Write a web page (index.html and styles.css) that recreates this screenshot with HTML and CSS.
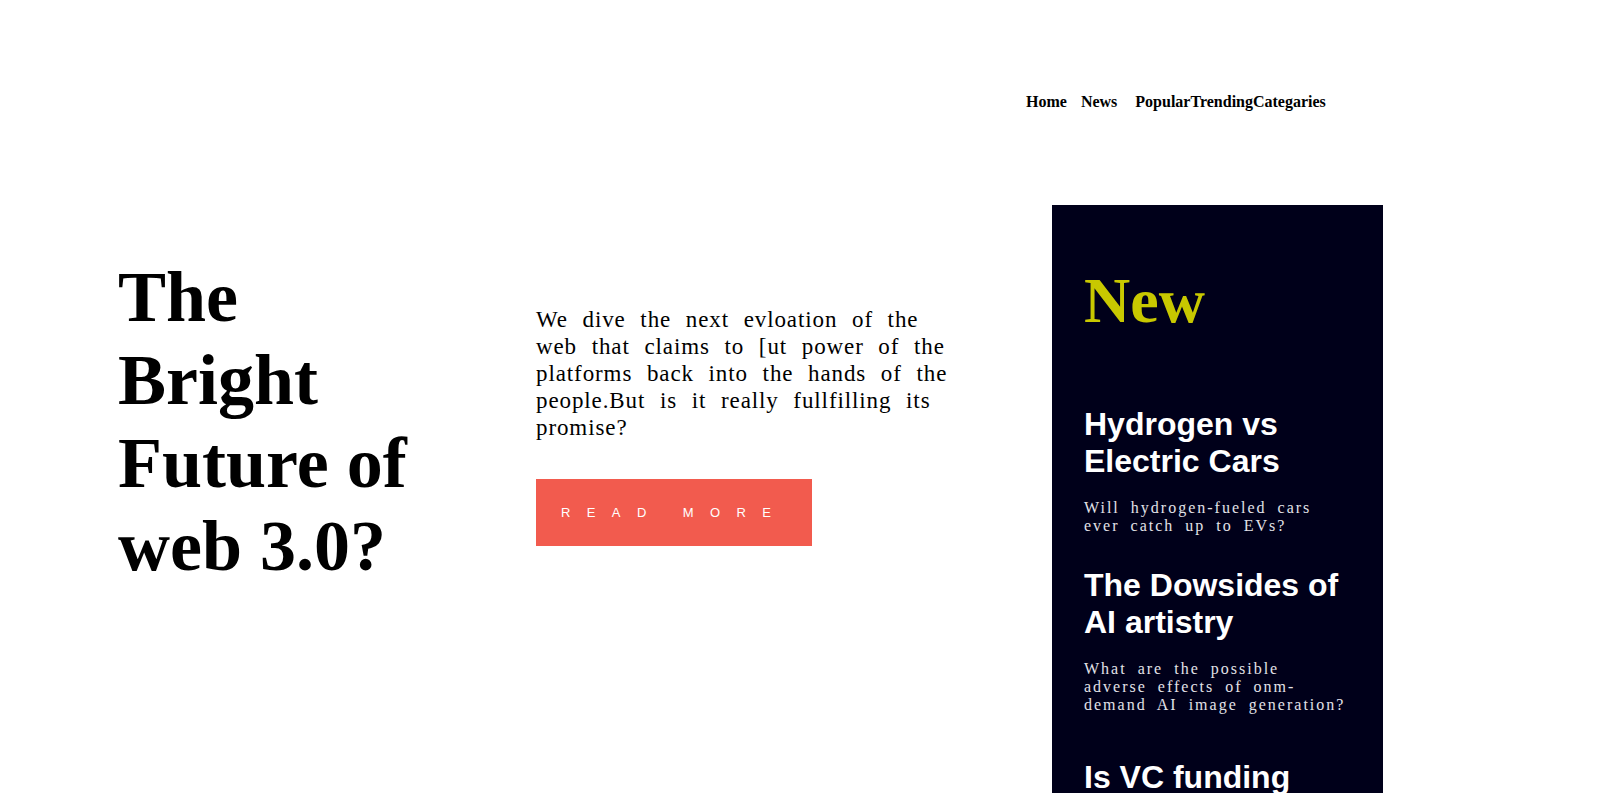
FILE: index.html
```html
<!DOCTYPE html>
<html lang="en">
<head>
<meta charset="utf-8">
<title>News Homepage</title>
<link rel="stylesheet" href="styles.css">
</head>
<body>
<header class="site-header">
  <nav>
    <ul class="nav-list">
      <li class="nav-item nav-home">Home</li>
      <li class="nav-item nav-news">News</li>
      <li class="nav-item">Popular</li>
      <li class="nav-item">Trending</li>
      <li class="nav-item">Categaries</li>
    </ul>
  </nav>
</header>
<main class="hero">
  <h1 class="hero-title">The Bright Future of web 3.0?</h1>
  <div class="intro">
    <p class="intro-text">We dive the next evloation of the web that claims to [ut power of the platforms back into the hands of the people.But is it really fullfilling its promise?</p>
    <button class="read-more">READ MORE</button>
  </div>
  <aside class="sidebar">
    <h2 class="sidebar-title">New</h2>
    <article class="news-item news-first">
      <h3 class="news-headline">Hydrogen vs Electric Cars</h3>
      <p class="news-text">Will hydrogen-fueled cars ever catch up to EVs?</p>
    </article>
    <article class="news-item news-second">
      <h3 class="news-headline">The Dowsides of AI artistry</h3>
      <p class="news-text">What are the possible adverse effects of onm-demand AI image generation?</p>
    </article>
    <article class="news-item news-third">
      <h3 class="news-headline">Is VC funding drying up?</h3>
      <p class="news-text">Private funding by VC firms is down 50% YOY. We take a look at what that means.</p>
    </article>
  </aside>
</main>
</body>
</html>
```

FILE: styles.css
```css
html, body {
  margin: 0;
  padding: 0;
}

body {
  font-family: "Liberation Serif", "Times New Roman", serif;
  color: #000;
  background: #fff;
  min-height: 1830px;
}

.site-header {
  height: 205px;
  box-sizing: border-box;
  padding-top: 93px;
  padding-left: 1026px;
}

.nav-list {
  display: flex;
  list-style: none;
  margin: 0;
  padding: 0;
}

.nav-item {
  font-size: 16px;
  font-weight: 700;
  line-height: normal;
}

.nav-home {
  margin-right: 14px;
}

.nav-news {
  margin-right: 18px;
}

.hero {
  display: flex;
  align-items: flex-start;
  padding-left: 118px;
}

.hero-title {
  width: 300px;
  flex: none;
  margin: 51px 0 0;
  font-size: 72px;
  font-weight: 700;
  line-height: normal;
}

.intro {
  width: 420px;
  flex: none;
  margin: 101px 0 0 118px;
}

.intro-text {
  margin: 0;
  font-size: 23px;
  line-height: 27px;
  letter-spacing: 0.9px;
  word-spacing: 8px;
}

.read-more {
  display: block;
  margin-top: 38px;
  width: 276px;
  height: 67px;
  padding: 0 0 0 25px;
  border: 0;
  background: #f25b4e;
  color: #fff;
  font-family: "Liberation Sans", Arial, sans-serif;
  font-size: 13px;
  letter-spacing: 16.4px;
  text-align: left;
}

.sidebar {
  width: 331px;
  flex: none;
  box-sizing: border-box;
  margin-left: 96px;
  padding: 59px 35px 80px 32px;
  background: #00001a;
  color: #fff;
}

.sidebar-title {
  margin: 0;
  font-size: 64px;
  font-weight: 700;
  line-height: normal;
  color: #c8c800;
}

.news-first {
  margin-top: 68px;
}

.news-second {
  margin-top: 32px;
}

.news-third {
  margin-top: 45px;
}

.news-headline {
  margin: 0;
  font-family: "Liberation Sans", Arial, sans-serif;
  font-size: 32px;
  font-weight: 700;
  line-height: normal;
  color: #fff;
}

.news-text {
  margin: 19px 0 0;
  font-size: 16px;
  line-height: normal;
  letter-spacing: 2px;
  word-spacing: 5px;
  color: #e2e2e8;
}
```
